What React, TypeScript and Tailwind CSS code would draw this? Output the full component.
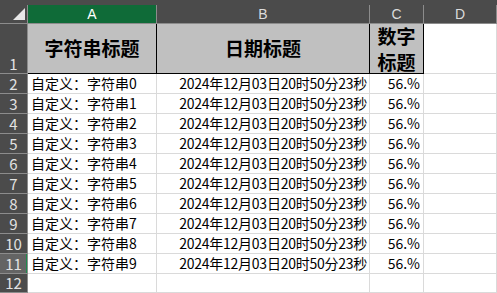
const cols = ['A', 'B', 'C', 'D'];
const rows = Array.from({ length: 10 }, (_, i) => ({
  n: i + 2,
  a: `自定义：字符串${i}`,
  b: '2024年12月03日20时50分23秒',
  c: '56.%',
}));

const font = { fontFamily: '"Noto Sans CJK SC", "Liberation Sans", sans-serif' };

function RowHead({ n, active = false, tall = false }: { n: number; active?: boolean; tall?: boolean }) {
  return (
    <div
      className={`relative flex justify-center border-r border-b border-[#8c8c8c] text-[15px] text-[#e2e2e2] ${
        tall ? 'items-end pb-[2px] leading-[14px]' : 'items-center leading-[18px]'
      } ${active ? 'bg-[#646464]' : 'bg-[#4b4b4b]'}`}
    >
      {n}
      {active && <span className="absolute right-0 top-0 bottom-0 w-[1px] bg-[#1e8a4c]" />}
    </div>
  );
}

export default function App() {
  return (
    <div
      className="w-[497px] h-[293px] overflow-hidden bg-white grid grid-cols-[28px_129px_213px_54px_73px] grid-rows-[5px_19px_50px_repeat(10,20px)_19px]"
      style={font}
    >
      {/* top strip */}
      <div className="col-span-5 bg-[#4b4b4b]" />

      {/* column headers */}
      <div className="relative bg-[#4b4b4b] border-r border-b border-[#8c8c8c]">
        <svg className="absolute left-[13px] top-[3px]" width="12" height="12" viewBox="0 0 12 12">
          <polygon points="12,0 12,12 0,12" fill="#e8e8e8" />
        </svg>
      </div>
      {cols.map((c) => (
        <div
          key={c}
          className={`flex items-center justify-center border-r border-b text-[14px] leading-none ${
            c === 'A'
              ? 'bg-[#0f6b38] text-white border-r-[#8c8c8c] border-b-[#8c8c8c]'
              : 'bg-[#4b4b4b] text-[#dcdcdc] border-[#8c8c8c]'
          }`}
          style={{ fontFamily: '"Liberation Sans", sans-serif' }}
        >
          {c}
        </div>
      ))}

      {/* row 1 */}
      <RowHead n={1} tall />
      <div className="flex items-center justify-center bg-[#c0c0c0] border-r border-b border-black text-[19px] font-bold text-black">
        字符串标题
      </div>
      <div className="flex items-center justify-center bg-[#c0c0c0] border-r border-b border-black text-[19px] font-bold text-black">
        日期标题
      </div>
      <div className="flex flex-col items-center justify-center bg-[#c0c0c0] border-r border-b border-black text-[19px] font-bold leading-[26px] text-black overflow-visible">
        <span>数字</span>
        <span>标题</span>
      </div>
      <div className="border-r border-b border-[#dadada]" />

      {/* data rows */}
      {rows.map((r) => (
        <div key={r.n} className="contents">
          <RowHead n={r.n} active={r.n === 11} />
          <div className="flex items-center pl-[3px] border-r border-b border-[#dadada] text-[14px] text-black whitespace-nowrap">
            {r.a}
          </div>
          <div className="flex items-center justify-end pr-[2px] border-r border-b border-[#dadada] text-[14px] tracking-[-0.25px] text-black whitespace-nowrap">
            {r.b}
          </div>
          <div className="flex items-center justify-end pr-[3px] border-r border-b border-[#dadada] text-[14px] text-black">
            {r.c}
          </div>
          <div className="border-r border-b border-[#dadada]" />
        </div>
      ))}

      {/* row 12 */}
      <RowHead n={12} />
      <div className="border-r border-b border-[#dadada]" />
      <div className="border-r border-b border-[#dadada]" />
      <div className="border-r border-b border-[#dadada]" />
      <div className="border-r border-b border-[#dadada]" />
    </div>
  );
}
